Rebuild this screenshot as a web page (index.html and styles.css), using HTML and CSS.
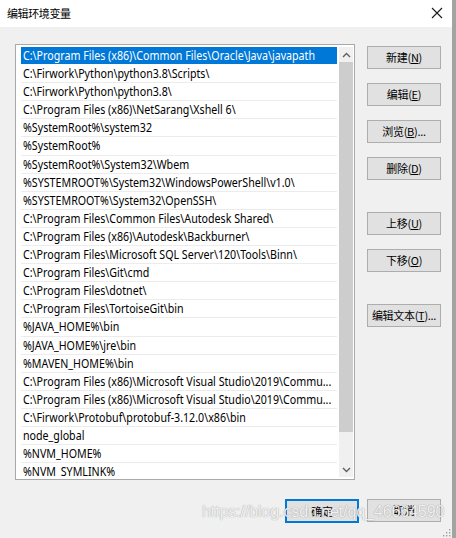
FILE: index.html
```html
<!DOCTYPE html>
<html lang="zh-CN">
<head>
<meta charset="utf-8">
<title>编辑环境变量</title>
<link rel="stylesheet" href="styles.css">
</head>
<body>
<div class="screen">
  <div class="window">
    <div class="titlebar">
      <span class="title">编辑环境变量</span>
      <svg class="close" width="12" height="12" viewBox="0 0 12 12"><path d="M1 1 L11 11 M11 1 L1 11" stroke="#1a1a1a" stroke-width="1.1" fill="none"/></svg>
    </div>
    <div class="content">
      <div class="main">
        <div class="listbox">
          <div class="rows">
            <div class="row selected"><span class="txt">C:\Program Files (x86)\Common Files\Oracle\Java\javapath</span></div>
            <div class="row"><span class="txt">C:\Firwork\Python\python3.8\Scripts\</span></div>
            <div class="row"><span class="txt">C:\Firwork\Python\python3.8\</span></div>
            <div class="row"><span class="txt">C:\Program Files (x86)\NetSarang\Xshell 6\</span></div>
            <div class="row"><span class="txt">%SystemRoot%\system32</span></div>
            <div class="row"><span class="txt">%SystemRoot%</span></div>
            <div class="row"><span class="txt">%SystemRoot%\System32\Wbem</span></div>
            <div class="row"><span class="txt">%SYSTEMROOT%\System32\WindowsPowerShell\v1.0\</span></div>
            <div class="row"><span class="txt">%SYSTEMROOT%\System32\OpenSSH\</span></div>
            <div class="row"><span class="txt">C:\Program Files\Common Files\Autodesk Shared\</span></div>
            <div class="row"><span class="txt">C:\Program Files (x86)\Autodesk\Backburner\</span></div>
            <div class="row"><span class="txt">C:\Program Files\Microsoft SQL Server\120\Tools\Binn\</span></div>
            <div class="row"><span class="txt">C:\Program Files\Git\cmd</span></div>
            <div class="row"><span class="txt">C:\Program Files\dotnet\</span></div>
            <div class="row"><span class="txt">C:\Program Files\TortoiseGit\bin</span></div>
            <div class="row"><span class="txt">%JAVA_HOME%\bin</span></div>
            <div class="row"><span class="txt">%JAVA_HOME%\jre\bin</span></div>
            <div class="row"><span class="txt">%MAVEN_HOME%\bin</span></div>
            <div class="row"><span class="txt">C:\Program Files (x86)\Microsoft Visual Studio\2019\Commu...</span></div>
            <div class="row"><span class="txt">C:\Program Files (x86)\Microsoft Visual Studio\2019\Commu...</span></div>
            <div class="row"><span class="txt">C:\Firwork\Protobuf\protobuf-3.12.0\x86\bin</span></div>
            <div class="row"><span class="txt">node_global</span></div>
            <div class="row"><span class="txt">%NVM_HOME%</span></div>
            <div class="row"><span class="txt">%NVM_SYMLINK%</span></div>
          </div>
          <div class="scrollbar">
            <div class="arrow">
              <svg width="9" height="6" viewBox="0 0 9 6"><path d="M1 5 L4.5 1.5 L8 5" stroke="#606060" stroke-width="1.4" fill="none"/></svg>
            </div>
            <div class="thumb"></div>
            <div class="track"></div>
            <div class="arrow">
              <svg width="9" height="6" viewBox="0 0 9 6"><path d="M1 1 L4.5 4.5 L8 1" stroke="#606060" stroke-width="1.4" fill="none"/></svg>
            </div>
          </div>
        </div>
        <div class="side">
          <button class="btn">新建(<u>N</u>)</button>
          <button class="btn">编辑(<u>E</u>)</button>
          <button class="btn">浏览(<u>B</u>)...</button>
          <button class="btn">删除(<u>D</u>)</button>
          <button class="btn far">上移(<u>U</u>)</button>
          <button class="btn">下移(<u>O</u>)</button>
          <button class="btn far">编辑文本(<u>T</u>)...</button>
        </div>
      </div>
      <div class="footer">
        <button class="btn default">确定</button>
        <button class="btn">取消</button>
      </div>
    </div>
    <svg class="grip" width="8" height="8" viewBox="0 0 8 8">
      <rect x="6" y="0" width="1.4" height="1.4" fill="#a0a0a0"/>
      <rect x="3" y="3" width="1.4" height="1.4" fill="#a0a0a0"/>
      <rect x="6" y="3" width="1.4" height="1.4" fill="#a0a0a0"/>
      <rect x="0" y="6" width="1.4" height="1.4" fill="#a0a0a0"/>
      <rect x="3" y="6" width="1.4" height="1.4" fill="#a0a0a0"/>
      <rect x="6" y="6" width="1.4" height="1.4" fill="#a0a0a0"/>
    </svg>
    <div class="watermark">https://blog.csdn.net/qq_46664590</div>
  </div>
  <div class="edge"></div>
</div>
</body>
</html>
```

FILE: styles.css
```css
html, body {
  margin: 0;
  padding: 0;
}
body {
  width: 456px;
  height: 538px;
  overflow: hidden;
  background: #f0f0f0;
  font-family: "Noto Sans", "Noto Sans CJK SC", sans-serif;
  color: #000;
}
.screen {
  display: flex;
  width: 456px;
  height: 538px;
}
.window {
  position: relative;
  width: 452px;
  height: 538px;
  background: #f0f0f0;
  display: flex;
  flex-direction: column;
}
.edge {
  width: 4px;
  height: 538px;
  background: #a3a3a3;
}
.titlebar {
  height: 27px;
  background: #ffffff;
  display: flex;
  align-items: center;
  justify-content: space-between;
  padding: 0 7px 0 7px;
  box-sizing: border-box;
}
.title {
  font-family: "Noto Sans CJK SC", sans-serif;
  font-size: 11px;
  line-height: 27px;
  margin-top: -1px;
  letter-spacing: -0.4px;
}
.close {
  margin-right: 2px;
  margin-top: -1px;
}
.content {
  padding: 17px 11px 0 15px;
  display: flex;
  flex-direction: column;
}
.main {
  display: flex;
  gap: 12px;
  align-items: flex-start;
}
.listbox {
  width: 340px;
  height: 436px;
  box-sizing: border-box;
  border: 1px solid #a9a9a9;
  background: #ffffff;
  padding: 1px 1px 2px 5px;
  display: flex;
  gap: 2px;
  overflow: hidden;
}
.rows {
  width: 316px;
  display: flex;
  flex-direction: column;
  overflow: hidden;
  padding-top: 1px;
}
.row {
  flex: none;
  height: 17.1px;
  border-bottom: 1px solid #ececec;
  font-size: 12.5px;
  line-height: 17px;
  padding-left: 2px;
  white-space: nowrap;
  overflow: hidden;
  color: #000;
}
.txt {
  display: inline-block;
  transform: scaleX(0.853);
  transform-origin: 0 50%;
}
.row.selected {
  background: #0078d7;
  color: #ffffff;
  border-bottom-color: #ffffff;
}
.scrollbar {
  width: 14px;
  height: 430px;
  margin-top: 1px;
  background: #f0f0f0;
  display: flex;
  flex-direction: column;
}
.arrow {
  height: 15px;
  display: flex;
  align-items: center;
  justify-content: center;
}
.thumb {
  height: 370px;
  background: #cdcdcd;
}
.track {
  flex: 1;
}
.side {
  display: flex;
  flex-direction: column;
  gap: 14px;
  margin-top: 2px;
}
.btn {
  width: 74px;
  height: 23px;
  box-sizing: border-box;
  border: 1px solid #adadad;
  background: #e1e1e1;
  font-family: "Noto Sans CJK SC", sans-serif;
  font-size: 11px;
  color: #000;
  padding: 0;
  margin: 0;
  line-height: 21px;
  text-align: center;
  letter-spacing: -0.3px;
}
.btn u {
  text-decoration: underline;
  text-underline-offset: 1px;
}
.btn.far {
  margin-top: 18px;
}
.btn.default {
  border: 2px solid #0078d7;
  height: 24px;
  line-height: 20px;
}
.footer {
  display: flex;
  justify-content: flex-end;
  gap: 8px;
  margin-top: 19px;
}
.grip {
  position: absolute;
  right: 1px;
  bottom: 1px;
}
.watermark {
  position: absolute;
  left: 202px;
  top: 503px;
  font-family: "Liberation Sans", sans-serif;
  font-size: 16px;
  color: rgba(255, 255, 255, 0.9);
  text-shadow: 0 0 1px rgba(80, 80, 80, 0.7);
  white-space: nowrap;
  letter-spacing: -0.1px;
}
```
